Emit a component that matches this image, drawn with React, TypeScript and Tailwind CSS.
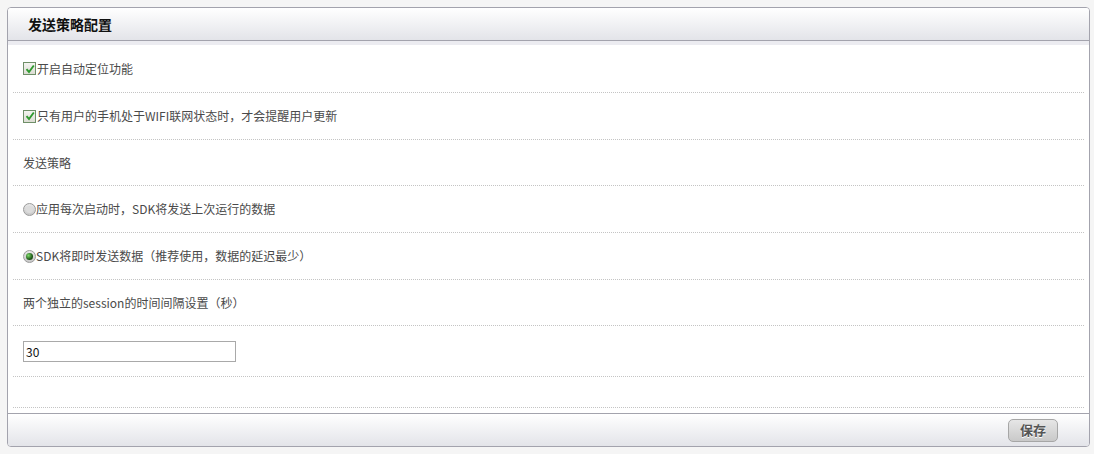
import React from "react";

const font = { fontFamily: '"Noto Sans CJK SC", "Noto Sans", sans-serif' };

function Check() {
  return (
    <span className="inline-flex h-[13px] w-[13px] items-center justify-center border border-[#6f8f68] bg-gradient-to-b from-[#f4f4f0] to-[#dcdcd4] mr-[1px] shrink-0">
      <svg width="10" height="10" viewBox="0 0 10 10">
        <path d="M1.5 5.2 L4 8 L8.8 1.5" stroke="#2f9a2f" strokeWidth="1.9" fill="none" />
      </svg>
    </span>
  );
}

function Radio({ on }: { on?: boolean }) {
  return (
    <span className="inline-flex h-[13px] w-[13px] items-center justify-center rounded-full border border-[#9a9a9a] bg-gradient-to-b from-[#e8e8e8] to-[#c8c8c8] shrink-0">
      {on ? <span className="h-[7px] w-[7px] rounded-full bg-[radial-gradient(circle_at_35%_35%,#7fdc6a,#1f5a1a_60%,#0d2a0b)]" /> : <span className="h-[7px] w-[7px] rounded-full bg-[#dcdcdc]" />}
    </span>
  );
}

function Row({ h, children }: { h: string; children?: React.ReactNode }) {
  return (
    <div className={`mx-[5px] flex items-center border-b border-dotted border-[#c4c4c4] pl-[10px] ${h}`}>
      {children}
    </div>
  );
}

export default function App() {
  return (
    <div className="min-h-[454px] w-[1094px] bg-[#f5f5f5] pl-[7px] pr-[4px] pt-[7px] pb-[7px]" style={font}>
      <div className="flex flex-col rounded-[4px] border border-[#a3a3ad] bg-white overflow-hidden">
        <div className="flex h-[33px] items-center border-b border-[#a3a3ad] bg-gradient-to-b from-[#ffffff] to-[#e3e4e9] pl-[20px]">
          <span className="text-[14px] font-bold text-[#111]">发送策略配置</span>
        </div>
        <div className="h-[4px] bg-[#ececf1]" />
        <div className="text-[12px] text-[#4a4a4a]">
          <Row h="h-[48px]">
            <Check />
            <span>开启自动定位功能</span>
          </Row>
          <Row h="h-[47px]">
            <Check />
            <span>只有用户的手机处于WIFI联网状态时，才会提醒用户更新</span>
          </Row>
          <Row h="h-[46px]">
            <span>发送策略</span>
          </Row>
          <Row h="h-[47px]">
            <Radio />
            <span>应用每次启动时，SDK将发送上次运行的数据</span>
          </Row>
          <Row h="h-[47px]">
            <Radio on />
            <span>SDK将即时发送数据（推荐使用，数据的延迟最少）</span>
          </Row>
          <Row h="h-[46px]">
            <span>两个独立的session的时间间隔设置（秒）</span>
          </Row>
          <Row h="h-[51px]">
            <input
              defaultValue="30"
              className="h-[21px] w-[213px] border border-[#a9a9a9] bg-white px-[2px] text-[12px] text-[#111] outline-none"
              style={font}
            />
          </Row>
          <Row h="h-[31px]" />
          <div className="h-[5px]" />
        </div>
        <div className="flex h-[33px] items-center justify-end border-t border-[#a3a3ad] bg-gradient-to-b from-[#ffffff] to-[#e3e4e9] pr-[31px]">
          <button
            className="h-[23px] w-[50px] rounded-[5px] border border-[#a6a6a6] bg-gradient-to-b from-[#e6e6e6] to-[#c9c9c9] text-[13px] font-bold text-[#555] [text-shadow:0_1px_0_#fff]"
            style={font}
          >
            保存
          </button>
        </div>
      </div>
    </div>
  );
}
